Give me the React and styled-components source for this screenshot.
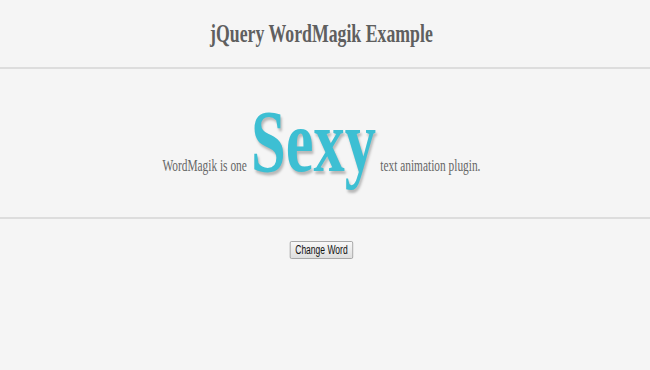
import styled, { createGlobalStyle } from "styled-components";

const GlobalStyle = createGlobalStyle`
  html, body {
    margin: 0;
    padding: 0;
    background: #f5f5f5;
    overflow: hidden;
  }
  body {
    font-family: "Liberation Serif", "Times New Roman", serif;
    color: #666;
  }
`;

/* the shot is squeezed sideways: lay out at full width, then squash */
const Viewport = styled.div`
  width: 650px;
  height: 370px;
  overflow: hidden;
  background: #f5f5f5;
`;

const Page = styled.div`
  width: 915px;
  height: 370px;
  transform: scaleX(0.7104);
  transform-origin: left top;
`;

const Header = styled.header`
  height: 67px;
  padding-right: 10px;
  border-bottom: 2px solid #dddddd;
  display: flex;
  justify-content: center;
  align-items: flex-start;
`;

const Title = styled.h1`
  margin: 19px 0 0;
  font-size: 25px;
  line-height: 30px;
  font-weight: bold;
  color: #5f5f5f;
`;

const Stage = styled.section`
  height: 148px;
  padding-right: 10px;
  border-bottom: 2px solid #dddddd;
  display: flex;
  justify-content: center;
  align-items: flex-start;
`;

const Sentence = styled.p`
  margin: 0;
  padding-top: 23px;
  display: flex;
  align-items: baseline;
  font-size: 16px;
  color: #666;
  white-space: pre;
`;

const Magic = styled.span`
  margin: 0 2px;
  font-size: 88px;
  line-height: 100px;
  font-weight: bold;
  color: #3dbfd3;
  text-shadow: 2px 3px 3px rgba(0, 0, 0, 0.25);
`;

const Controls = styled.div`
  display: flex;
  justify-content: center;
  padding: 22px 10px 0 0;
`;

const Button = styled.button`
  font-family: "Liberation Sans", Arial, sans-serif;
  font-size: 12px;
  color: #111;
  height: 18px;
  padding: 0 7px;
  border: 1px solid #9a9a9a;
  border-radius: 2px;
  background: linear-gradient(#f8f8f8, #dedede);
  cursor: pointer;
`;

export default function App() {
  return (
    <Viewport>
      <GlobalStyle />
      <Page>
        <Header>
          <Title>jQuery WordMagik Example</Title>
        </Header>
        <Stage>
          <Sentence>
            WordMagik is one <Magic>Sexy</Magic> text animation plugin.
          </Sentence>
        </Stage>
        <Controls>
          <Button>Change Word</Button>
        </Controls>
      </Page>
    </Viewport>
  );
}
